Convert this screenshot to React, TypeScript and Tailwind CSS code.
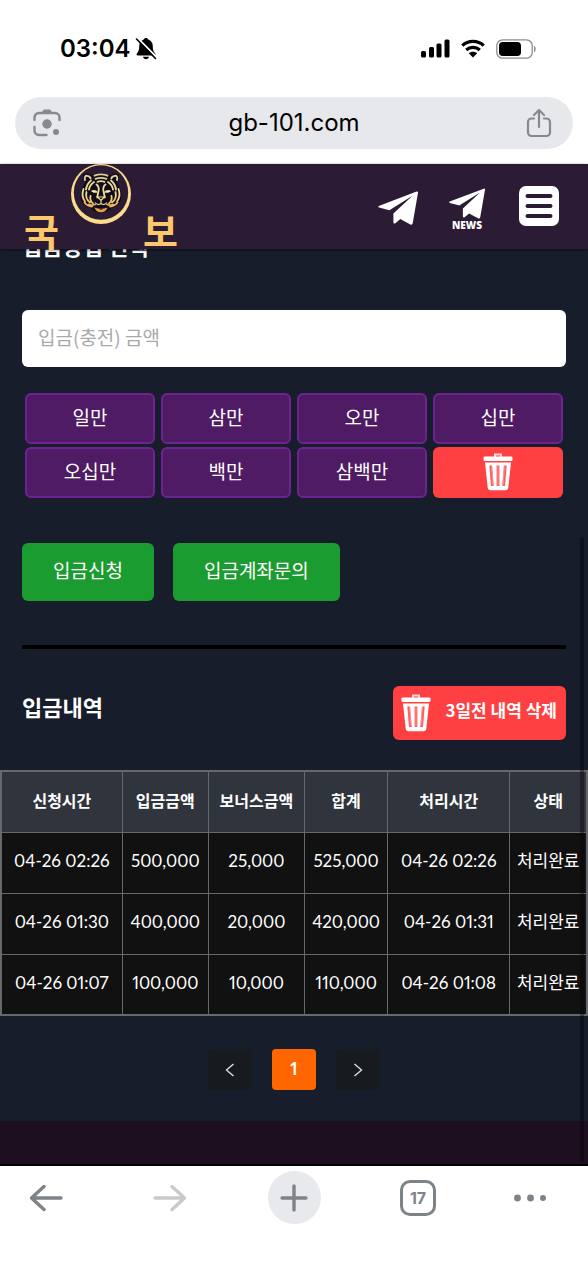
import { useState } from 'react'

type Deposit = {
  requested: string
  amount: string
  bonus: string
  total: string
  processed: string
  status: string
}

const presets = [
  { label: '일만', value: 10000 },
  { label: '삼만', value: 30000 },
  { label: '오만', value: 50000 },
  { label: '십만', value: 100000 },
  { label: '오십만', value: 500000 },
  { label: '백만', value: 1000000 },
  { label: '삼백만', value: 3000000 },
]

const columns = [
  { title: '신청시간', width: 'w-[121px]' },
  { title: '입금금액', width: 'w-[86px]' },
  { title: '보너스금액', width: 'w-[96px]' },
  { title: '합계', width: 'w-[83px]' },
  { title: '처리시간', width: 'w-[122px]' },
  { title: '상태', width: 'w-[77px]' },
]

const deposits: Deposit[] = [
  { requested: '04-26 02:26', amount: '500,000', bonus: '25,000', total: '525,000', processed: '04-26 02:26', status: '처리완료' },
  { requested: '04-26 01:30', amount: '400,000', bonus: '20,000', total: '420,000', processed: '04-26 01:31', status: '처리완료' },
  { requested: '04-26 01:07', amount: '100,000', bonus: '10,000', total: '110,000', processed: '04-26 01:08', status: '처리완료' },
]

const TrashIcon = () => (
  <svg width="30" height="38" viewBox="0 0 30 38" fill="none" aria-hidden="true">
    <path d="M12 4V1.500h6V4" stroke="#ffd9d9" strokeWidth="2" />
    <rect x="0.500" y="3.500" width="29" height="4.500" rx="1.200" fill="#fff" />
    <path d="M2 9.500h26l-2.700 25a3 3 0 0 1-3 2.700H7.700a3 3 0 0 1-3-2.700z" fill="#fff" />
    <path d="M7.700 12.500l1.700 20.500M15 12.500V33M22.300 12.500l-1.700 20.500" stroke="#ff5a5c" strokeWidth="2.800" />
    <path d="M8.600 13l1.500 19.500M15 13v19.500M21.400 13l-1.500 19.500" stroke="#ffb0b0" strokeWidth=".6" />
  </svg>
)

const PlaneIcon = ({ className }: { className: string }) => (
  <svg className={className} viewBox="0 0 40 34" fill="#fff" aria-hidden="true">
    <path d="M.8 14.900 38.600.5c.9-.3 1.600.3 1.400 1.300l-5.300 30.400c-.2 1.300-1.300 1.800-2.400 1.200l-10-5.300-4.900 4.100c-.9.8-2 .4-2-.9v-8.700L34.500 4.800 11.400 19.300 1 16.400c-.9-.3-1-1.200-.2-1.500z" />
  </svg>
)

const TigerEmblem = () => (
  <svg width="62" height="60" viewBox="0 0 62 60" fill="none" aria-hidden="true">
    <defs>
      <linearGradient id="tigerGold" x1="0" y1="8" x2="0" y2="50" gradientUnits="userSpaceOnUse">
        <stop offset="0" stopColor="#d9cc9a" />
        <stop offset="0.5" stopColor="#f6df94" />
        <stop offset="1" stopColor="#e8963c" />
      </linearGradient>
    </defs>
    <circle cx="31" cy="30" r="30" fill="#f9dd8c" />
    <circle cx="31" cy="28.500" r="27.200" fill="#2c1b35" />
    <path d="M13.500 10c3-1.500 6-.5 8 1.500 6-3.500 13-3.500 19 0 2-2 5-3 8-1.500.8 3 0 6-1.800 8 2.500 4 5 10 4.800 15-.3 6-4.500 9.500-9.500 10.500-2 3-6 5-11 5s-9-2-11-5c-5-1-9.200-4.500-9.500-10.500-.2-5 2.300-11 4.800-15-1.800-2-2.600-5-1.800-8z" fill="#120d18" />
    <g stroke="url(#tigerGold)" strokeWidth="1.800" strokeLinecap="round">
      <path d="M15 16c-.7-3 .3-4.500 2.300-4.200 1.800.3 3 1.200 3.400 2.700M47 16c.7-3-.3-4.500-2.300-4.200-1.800.3-3 1.200-3.400 2.700" />
      <path d="M24.500 11.700c4-1.700 9-1.700 13 0M25.500 14.800c3.500-1.300 7.500-1.300 11 0M27.500 17.800c2.200-.8 4.800-.8 7 0" />
      <path d="M21 16.500c-3 2.500-4.500 5.500-5 9M24 18c-3 2-4.500 4.500-5 7.500M41 16.500c3 2.500 4.500 5.500 5 9M38 18c3 2 4.500 4.500 5 7.500" />
      <path d="M26.500 20.500c1.500 1 2.300 3 2.300 5l-1.600 8M35.500 20.500c-1.500 1-2.300 3-2.300 5l1.600 8" />
      <path d="M13.500 25c-1.700 4.500-1.200 9 1.500 12.500M16.500 28c-1 4 .2 8 3.500 10.500M20.500 32c-.7 3 .3 5.500 2.500 7.500" />
      <path d="M48.500 25c1.700 4.500 1.200 9-1.500 12.500M45.500 28c1 4-.2 8-3.500 10.500M41.500 32c.7 3-.3 5.500-2.500 7.500" />
      <path d="M14.500 38.500c1.800 2.500 4.500 3.800 7.500 4M47.500 38.500c-1.800 2.500-4.500 3.800-7.500 4M19 40.500c2 .8 4 .8 6 0M43 40.500c-2 .8-4 .8-6 0" />
    </g>
    <path d="M21 27c2.200-1.700 5-1.300 6.800 1.200-2.300 1-5.200.8-6.800-1.200zM41 27c-2.200-1.700-5-1.300-6.800 1.200 2.300 1 5.200.8 6.800-1.200z" fill="#fbe9ae" />
    <path d="M27.500 33h7L31 36.500zM25 38.500c1.800 2.300 4.300 2.500 6 .8 1.700 1.700 4.200 1.500 6-.8M31 36.500v3" stroke="#f6df94" strokeWidth="1.100" />
    <path d="M24.500 43.500c4 1.600 9 1.600 13 0-1.200 3.300-3.500 4.800-6.500 4.800s-5.300-1.500-6.500-4.800z" fill="#e8a247" />
    <path d="M29 44.700h4l-2 1.300z" fill="#120d18" />
  </svg>
)

const StatusBar = () => (
  <div className="flex h-[97px] items-center justify-between pr-[51px] pl-[60px] text-black">
    <div className="flex items-center gap-1">
      <span className="text-[24px] leading-8 font-semibold">03:04</span>
      <svg width="22" height="23" viewBox="0 0 22 23" aria-hidden="true">
        <path d="M11 1c1.200 0 2 .7 2.200 1.600 3 .9 4.600 3.400 4.600 6.600 0 4.200 1 5.600 2.300 7.200.8 1 .3 2-.9 2H2.800c-1.200 0-1.700-1-.9-2C3.200 14.800 4.200 13.400 4.200 9.200c0-3.200 1.600-5.700 4.600-6.600C9 1.700 9.800 1 11 1zM8 19.800h6c-.3 1.500-1.500 2.500-3 2.500s-2.700-1-3-2.500z" fill="#000" />
        <path d="M2.800 1.200 21.300 20" stroke="#fff" strokeWidth="1.800" />
        <path d="M1.500 2 20.500 21.500" stroke="#000" strokeWidth="1.600" strokeLinecap="round" />
      </svg>
    </div>
    <div className="flex items-center gap-[11px]">
      <svg width="30" height="19" viewBox="0 0 30 19" aria-hidden="true">
        <rect x="1" y="12" width="5" height="6.500" rx="1.500" />
        <rect x="9" y="8" width="5" height="10.500" rx="1.500" />
        <rect x="16.500" y="4.500" width="5" height="14" rx="1.500" />
        <rect x="24.500" y="0.500" width="5" height="18" rx="1.500" />
      </svg>
      <svg width="24" height="19" viewBox="0 0 24 19" fill="none" aria-hidden="true">
        <path d="M1.300 6.600c6-5.600 15.400-5.600 21.400 0M5.200 11c3.900-3.500 9.700-3.500 13.600 0" stroke="#000" strokeWidth="3.200" />
        <path d="M12 18.500 7.800 14.200c2.400-2 6-2 8.400 0z" fill="#000" />
      </svg>
      <svg width="41" height="20" viewBox="0 0 41 20" fill="none" aria-hidden="true">
        <rect x="0.800" y="0.800" width="35.400" height="18.400" rx="5.800" stroke="#8c8c8c" strokeWidth="1.300" />
        <rect x="3" y="3" width="22" height="14" rx="3.800" fill="#000" />
        <path d="M38 6.800c2.200.8 2.200 5.600 0 6.400z" fill="#8c8c8c" />
      </svg>
    </div>
  </div>
)

const AddressBar = () => (
  <div className="px-[15px] pb-[15px]">
    <div className="flex h-[52px] items-center justify-between rounded-full bg-[#e6e8ec] pr-[21px] pl-[17px]">
      <button type="button" aria-label="Lens">
        <svg width="30" height="30" viewBox="0 0 30 30" fill="none" aria-hidden="true">
          <path d="M2.500 12V9.500a4.500 4.500 0 0 1 4.500-4.500h16a4.500 4.500 0 0 1 4.500 4.500V12M2.500 19v3.500A4.500 4.500 0 0 0 7 27h7.500" stroke="#86898d" strokeWidth="2.400" strokeLinecap="round" />
          <path d="M9.500 5.500 11 2.600c.3-.6.900-1 1.600-1h4.800c.7 0 1.300.4 1.600 1l1.500 2.900z" fill="#86898d" />
          <circle cx="15" cy="16" r="4.700" fill="#86898d" />
          <circle cx="24" cy="24" r="3" fill="#86898d" />
        </svg>
      </button>
      <span className="text-[24px] leading-8 text-black">gb-101.com</span>
      <button type="button" aria-label="Share">
        <svg width="26" height="30" viewBox="0 0 26 30" fill="none" stroke="#86898d" strokeWidth="2.200" strokeLinecap="round" strokeLinejoin="round" aria-hidden="true">
          <path d="M8 10.500H5.500A3.500 3.500 0 0 0 2 14v10.500A3.500 3.500 0 0 0 5.500 28h15a3.500 3.500 0 0 0 3.500-3.500V14a3.500 3.500 0 0 0-3.500-3.500H18M13 19V2M8 7l5-5 5 5" />
        </svg>
      </button>
    </div>
  </div>
)

const Header = () => (
  <header className="relative z-10 flex h-[85px] justify-between bg-[#2c1b35] pr-[29px] pl-6 shadow-[0_1px_3px_rgba(0,0,0,0.6)]">
    <a href="#home" className="flex items-start text-[38px] leading-10 font-bold text-[#fbc86c]">
      <span className="mt-[46px]">국</span>
      <span className="mx-[11px]">
        <TigerEmblem />
      </span>
      <span className="mt-[46px]">보</span>
    </a>
    <nav className="flex items-start gap-[31px] pt-[22px]">
      <a href="#telegram" aria-label="Telegram" className="pt-[5px]">
        <PlaneIcon className="h-[34px] w-[40px]" />
      </a>
      <a href="#news" className="flex flex-col items-center pt-[2px] font-['Open_Sans',sans-serif] text-[10px] leading-3 font-extrabold text-white">
        <PlaneIcon className="h-[31px] w-[36px]" />
        NEWS
      </a>
      <button type="button" aria-label="Menu" className="ml-[3px]">
        <svg width="40" height="40" viewBox="0 0 40 40" aria-hidden="true">
          <rect width="40" height="40" rx="7" fill="#fff" />
          <path d="M8.500 10h23M8.500 20h23M8.500 30h23" stroke="#2c1b35" strokeWidth="4" strokeLinecap="round" />
        </svg>
      </button>
    </nav>
  </header>
)

const DepositForm = () => {
  const [amount, setAmount] = useState('')

  const addAmount = (value: number) => {
    setAmount(String(Number(amount) + value))
  }

  return (
    <form className="px-[22px]" onSubmit={(e) => e.preventDefault()}>
      <h2 className="-mt-5 text-[22px] leading-8 font-bold">입금방법 선택</h2>
      <input type="text" name="amount" aria-label="입금(충전) 금액" value={amount} placeholder="입금(충전) 금액" onChange={(e) => setAmount(e.target.value)} className="mt-[49px] h-[57px] w-full rounded-md bg-white px-4 pb-1 text-[19px] text-black placeholder-[#a9a9a9] focus:outline-none" />
      <div className="mt-[26px] grid grid-cols-4 gap-x-1.5 gap-y-[3px] px-[3px]">
        {presets.map((preset) => (
          <button key={preset.value} type="button" onClick={() => addAmount(preset.value)} className="h-[51px] rounded-md border-2 border-[#6f2393] bg-[#4f1b64] pb-0.5 text-[19px]">
            {preset.label}
          </button>
        ))}
        <button type="button" aria-label="초기화" onClick={() => setAmount('')} className="flex h-[51px] items-center justify-center rounded-md bg-[#ff4042] pb-0.5">
          <TrashIcon />
        </button>
      </div>
      <div className="mt-[45px] flex gap-[19px] text-[19px]">
        <button type="submit" className="h-[58px] rounded-md bg-[#1b9c30] px-[31px] pb-1">입금신청</button>
        <button type="button" className="h-[58px] rounded-md bg-[#1b9c30] px-[31px] pb-1">입금계좌문의</button>
      </div>
    </form>
  )
}

const DepositTable = () => (
  <table className="mt-[30px] w-full table-fixed border-collapse border-2 border-[#67686b] bg-[#111111] text-center whitespace-nowrap">
    <thead>
      <tr className="h-[61px] bg-[#30343d] text-[16px]">
        {columns.map((column) => (
          <th key={column.title} className={`${column.width} border border-[#67686b] pb-1 font-bold`}>{column.title}</th>
        ))}
      </tr>
    </thead>
    <tbody className="font-['Lato','Noto_Sans_CJK_KR',sans-serif] text-[17px] proportional-nums">
      {deposits.map((deposit) => (
        <tr key={deposit.requested} className="h-[61px]">
          {Object.values(deposit).map((value, i) => (
            <td key={i} className="border border-[#67686b] pb-1">{value}</td>
          ))}
        </tr>
      ))}
    </tbody>
  </table>
)

const Pagination = () => (
  <nav aria-label="페이지" className="flex justify-center gap-5 pt-[33px] pb-[31px]">
    <button type="button" aria-label="이전" className="flex h-[41px] w-11 items-center justify-center rounded-sm bg-[#171b20]">
      <svg width="10" height="14" viewBox="0 0 10 14" fill="none" stroke="#dddddd" strokeWidth="1.400" aria-hidden="true">
        <path d="M8.500 1 1.500 7l7 6" />
      </svg>
    </button>
    <button type="button" aria-current="page" className="h-[41px] w-11 rounded-sm bg-[#ff6600] pb-0.5 font-['Noto_Sans',sans-serif] text-[17px] font-semibold">1</button>
    <button type="button" aria-label="다음" className="flex h-[41px] w-11 items-center justify-center rounded-sm bg-[#171b20]">
      <svg width="10" height="14" viewBox="0 0 10 14" fill="none" stroke="#dddddd" strokeWidth="1.400" aria-hidden="true">
        <path d="M1.500 1l7 6-7 6" />
      </svg>
    </button>
  </nav>
)

const BrowserToolbar = () => (
  <nav aria-label="브라우저" className="flex h-[114px] items-start justify-between bg-white px-4 pt-[5px]">
    <button type="button" aria-label="Back" className="flex h-[53px] w-[60px] items-center justify-center">
      <svg width="36" height="28" viewBox="0 0 36 28" fill="none" stroke="#7e8387" strokeWidth="3.400" strokeLinecap="round" strokeLinejoin="round" aria-hidden="true">
        <path d="M33 14H3.500M16 2.500 3.500 14 16 25.500" />
      </svg>
    </button>
    <button type="button" aria-label="Forward" className="flex h-[53px] w-[60px] items-center justify-center">
      <svg width="36" height="28" viewBox="0 0 36 28" fill="none" stroke="#c9cacb" strokeWidth="3.400" strokeLinecap="round" strokeLinejoin="round" aria-hidden="true">
        <path d="M3 14h29.500M20 2.500 32.500 14 20 25.500" />
      </svg>
    </button>
    <button type="button" aria-label="New tab" className="flex h-[53px] w-[60px] items-center justify-center">
      <span className="flex size-[53px] items-center justify-center rounded-full bg-[#e8e9ed]">
        <svg width="28" height="28" viewBox="0 0 28 28" fill="none" stroke="#7e8387" strokeWidth="3.400" strokeLinecap="round" aria-hidden="true">
          <path d="M14 2v24M2 14h24" />
        </svg>
      </span>
    </button>
    <button type="button" className="flex h-[53px] w-[60px] items-center justify-center">
      <span className="flex size-9 items-center justify-center rounded-[10px] border-3 border-[#7e8387] text-[16px] font-bold text-[#7e8387]">17</span>
    </button>
    <button type="button" aria-label="More" className="flex h-[53px] w-[60px] items-center">
      <svg width="34" height="8" viewBox="0 0 34 8" fill="#7e8387" aria-hidden="true">
        <circle cx="5.500" cy="4" r="3.400" />
        <circle cx="18.500" cy="4" r="3.400" />
        <circle cx="31" cy="4" r="3" />
      </svg>
    </button>
  </nav>
)

const App = () => {
  return (
    <div className="bg-white font-['Inter','Noto_Sans_CJK_KR',sans-serif]">
      <StatusBar />
      <AddressBar />
      <div className="relative bg-[#171d2b] font-['Noto_Sans_CJK_KR',sans-serif] text-white">
        <Header />
        <main>
          <DepositForm />
          <hr className="mx-[22px] mt-11 border-t-4 border-black" />
          <div className="mt-[37px] flex items-start justify-between px-[22px]">
            <h2 className="mt-1 text-[22px] leading-8 font-bold">입금내역</h2>
            <button type="button" className="flex h-[54px] items-center gap-3.5 rounded-md bg-[#ff4042] pr-[9px] pl-2 text-[17px] font-bold">
              <TrashIcon />
              <span className="pb-1.5">3일전 내역 삭제</span>
            </button>
          </div>
          <DepositTable />
          <Pagination />
        </main>
        <footer className="h-[45px] border-b-2 border-black bg-[#1d0f1f]" />
        <div className="absolute right-1 bottom-1 h-[625px] w-1 rounded-full bg-black/35" />
      </div>
      <BrowserToolbar />
    </div>
  )
}

export default App
